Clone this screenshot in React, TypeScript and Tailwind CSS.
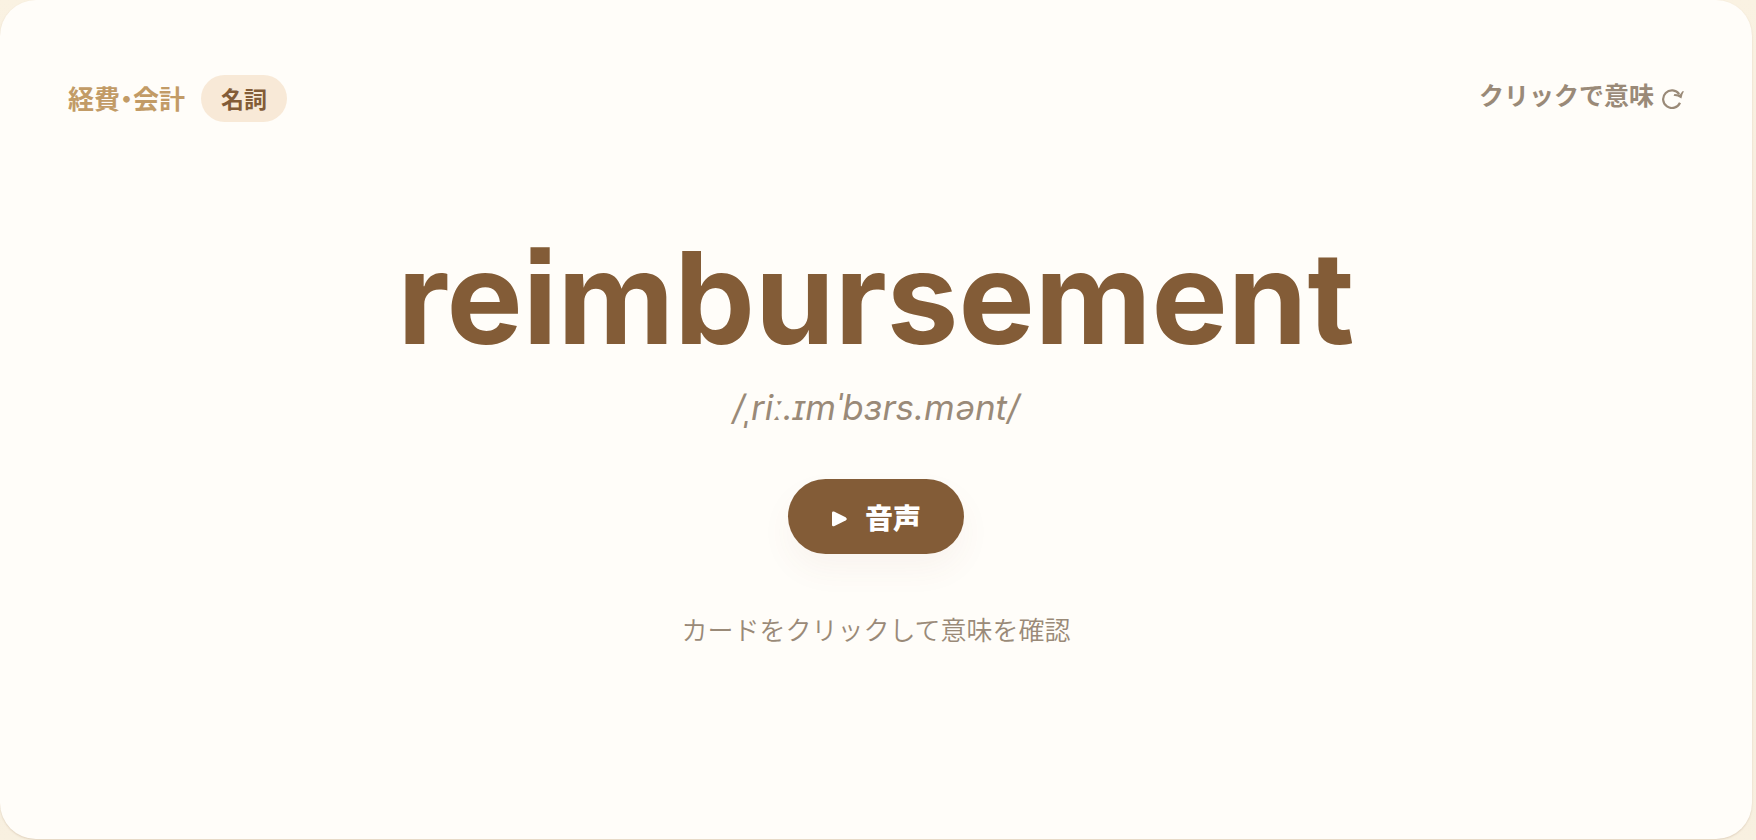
function ReplayIcon() {
  return (
    <svg aria-hidden="true" viewBox="0 0 22 20" className="mt-1.5 h-5 w-[22px]" fill="none">
      <path d="M18 13.7A8.8 8.8 0 1 1 17.2 5.2" stroke="currentColor" strokeWidth="2.2" />
      <path d="M22 2.2Q20 5 19.4 9.4Q16 6.8 11.6 6.8L12.4 5L18 5.6L20.4 2.2Z" fill="currentColor" />
    </svg>
  );
}

function PlayIcon() {
  return (
    <svg aria-hidden="true" viewBox="0 0 16 16" className="mt-1 size-4" fill="currentColor">
      <path d="M1 1.8Q1 0 3 .6L14.6 6.2Q17 8 14.6 9.6L3 15.2Q1 15.8 1 14Z" />
    </svg>
  );
}

export default function App() {
  return (
    <div className="flex min-h-screen bg-linear-to-b from-[#faf2e2] via-[#f5eadc] to-[#f8f0e0] pr-1 pb-px font-['Inter','Noto_Sans_CJK_JP',sans-serif]">
      <main className="flex flex-1 flex-col rounded-[36px] bg-[#fffdf9] px-[68px] pt-[75px] pb-16 text-[#9a8a78] shadow-[0_1px_2px_rgba(130,92,54,0.2)]">
        <header className="flex items-start justify-between">
          <div className="flex items-center gap-4">
            <span className="pt-0.5 text-[26px] leading-[45px] font-bold text-[#c29b66] [font-feature-settings:'palt']">経費・会計</span>
            <span className="rounded-full bg-[#f8e9d7] px-5 pt-1 text-[23px] leading-[43px] font-bold text-[#835c37]">名詞</span>
          </div>
          <a href="#meaning" className="flex items-center gap-2 text-[25px] leading-[42px] font-bold">
            クリックで意味
            <ReplayIcon />
          </a>
        </header>
        <section className="mt-[101px] flex flex-col items-center">
          <h1 className="text-[128px] leading-[150px] font-bold text-[#835c37] [font-optical-sizing:none] [font-feature-settings:'ss07']">reimbursement</h1>
          <p className="mt-2 text-[35px] leading-[52px] italic">/ˌriː.ɪmˈbɜrs.mənt/</p>
          <button
            type="button"
            className="mt-[46px] flex h-[75px] items-center gap-[18px] rounded-full bg-[#835c37] px-[43px] text-[28px] leading-10 font-black text-white shadow-[0_16px_32px_rgba(131,72,55,0.05)]"
          >
            <PlayIcon />
            <span className="pt-1">音声</span>
          </button>
          <p className="mt-[57px] text-[26px] leading-10 font-[350]">カードをクリックして意味を確認</p>
        </section>
      </main>
    </div>
  );
}
